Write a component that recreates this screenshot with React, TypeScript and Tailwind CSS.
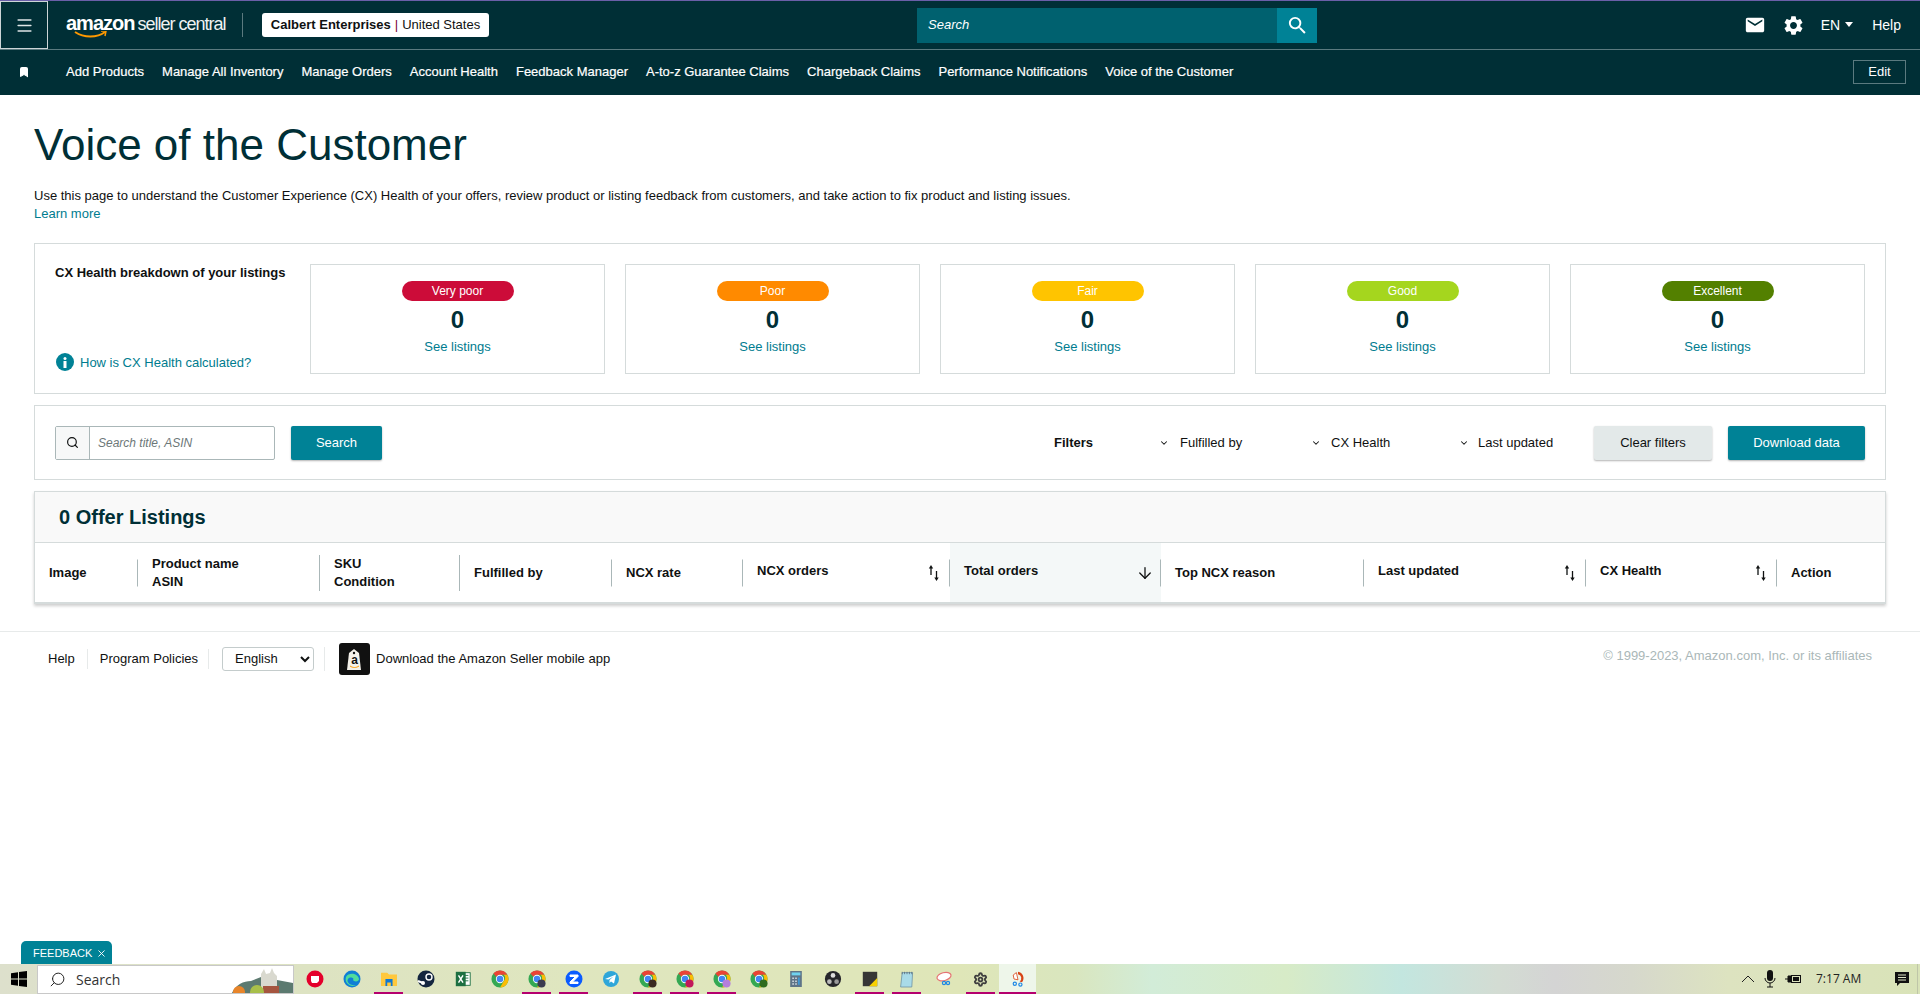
import React from "react";
import { Menu, Bookmark, Search, Settings, ChevronDown, ArrowDown, X } from "lucide-react";
import { MdEmail, MdSettings, MdSearch } from "react-icons/md";

const nav = ["Add Products","Manage All Inventory","Manage Orders","Account Health","Feedback Manager","A-to-z Guarantee Claims","Chargeback Claims","Performance Notifications","Voice of the Customer"];
const cards = [
  ["Very poor","bg-[#cc0c39]"],["Poor","bg-[#ff8a00]"],["Fair","bg-[#ffc400]"],["Good","bg-[#a5d61e]"],["Excellent","bg-[#538000]"],
];

function SortIcon() {
  return (
    <svg width="12" height="18" viewBox="0 0 12 18" className="text-[#0f1111] mr-[3px]">
      <path d="M3 11V3" stroke="currentColor" strokeWidth="1.3" fill="none" />
      <path d="M0.800 4.500L3 1l2.200 3.500z" fill="currentColor" />
      <path d="M8.500 7v8" stroke="currentColor" strokeWidth="1.3" fill="none" />
      <path d="M6.300 13.500L8.500 17l2.200-3.500z" fill="currentColor" />
    </svg>
  );
}

function Chrome({ badge }: { badge?: string }) {
  return (
    <svg width="18" height="18" viewBox="0 0 20 20">
      <circle cx="10" cy="10" r="9.500" fill="#34a853" />
      <path d="M10 .5a9.500 9.500 0 0 1 8.200 4.750H10A4.750 4.750 0 0 0 5.900 7.600L2.700 4A9.500 9.500 0 0 1 10 .5z" fill="#ea4335" />
      <path d="M18.200 5.250A9.500 9.500 0 0 1 10 19.500l4.100-7.100a4.750 4.750 0 0 0 0-7.150z" fill="#fbbc05" />
      <circle cx="10" cy="10" r="4.600" fill="#fff" />
      <circle cx="10" cy="10" r="3.600" fill="#4285f4" />
      {badge && <circle cx="15" cy="15" r="4.500" fill={badge} />}
    </svg>
  );
}

type Item = { el: React.ReactNode; open?: boolean; active?: boolean };
const items: Item[] = [
  { el: <svg width="20" height="20" viewBox="0 0 20 20"><circle cx="10" cy="10" r="8.500" fill="#e4002b"/><path d="M6 7h8v5l-2 2H7l-1-2z" fill="#fff"/></svg> },
  { el: <svg width="20" height="20" viewBox="0 0 20 20"><circle cx="10" cy="10" r="8.500" fill="#0f7fd6"/><path d="M4 8c2-4 11-5 13 2 0 3-5 3-6 1 2-2-3-4-5-1-2 3 2 7 8 6-5 3-12-2-10-8z" fill="#4fdc9c"/></svg> },
  { open: true, el: <svg width="18" height="16" viewBox="0 0 20 18"><path d="M1 2h7l2 2h9v13H1z" fill="#ffc83d"/><path d="M6 9h8v8h-2v-4H8v4H6z" fill="#0f78d4"/></svg> },
  { el: <svg width="20" height="20" viewBox="0 0 20 20"><circle cx="10" cy="10" r="8.500" fill="#14263f"/><circle cx="13" cy="8" r="3" fill="none" stroke="#fff" strokeWidth="1.400"/><path d="M2 12l5 2" stroke="#fff" strokeWidth="2"/><circle cx="7" cy="14" r="2" fill="#fff"/></svg> },
  { el: <svg width="18" height="18" viewBox="0 0 20 20"><rect x="8" y="3" width="10" height="14" fill="#fff" stroke="#1d6f42"/><path d="M10 6h6M10 9h6M10 12h6" stroke="#1d6f42"/><rect x="2" y="2" width="11" height="16" fill="#1d6f42"/><path d="M5 6l5 8M10 6l-5 8" stroke="#fff" strokeWidth="1.600"/></svg> },
  { el: <Chrome /> },
  { open: true, el: <Chrome badge="#3b3b4f" /> },
  { open: true, el: <svg width="20" height="20" viewBox="0 0 20 20"><circle cx="10" cy="10" r="8.500" fill="#0b5cff"/><path d="M6 6h8v1.500L8.500 13H14v1.500H6V13l5.500-5.500H6z" fill="#fff" stroke="#fff"/></svg> },
  { el: <svg width="20" height="20" viewBox="0 0 20 20"><circle cx="10" cy="10" r="8" fill="#2ea6d9"/><path d="M4 10l11-4.500-2 9-3-2-1.500 1.500V11l4-3.500-5 3z" fill="#fff"/></svg> },
  { open: true, el: <Chrome badge="#3a2a22" /> },
  { open: true, el: <Chrome badge="#c2185b" /> },
  { open: true, el: <Chrome badge="#b57edc" /> },
  { el: <Chrome badge="#2e6b1f" /> },
  { el: <svg width="12" height="16" viewBox="0 0 16 22"><rect width="16" height="22" fill="#5f7488"/><rect x="2" y="2" width="12" height="4" fill="#6fd3f0"/><path d="M3 9h2v2H3zM7 9h2v2H7zM3 13h2v2H3zM7 13h2v2H7zM3 17h2v2H3zM7 17h2v2H7z" fill="#dfe6ec"/><rect x="11" y="9" width="2" height="10" fill="#3aa0e6"/></svg> },
  { el: <svg width="18" height="18" viewBox="0 0 20 20"><circle cx="10" cy="10" r="9" fill="#26262b"/><circle cx="10" cy="6" r="2.600" fill="#ddd"/><circle cx="6" cy="13" r="2.600" fill="#bbb"/><circle cx="14" cy="13" r="2.600" fill="#999"/></svg> },
  { open: true, el: <svg width="18" height="18" viewBox="0 0 20 20"><rect x="2" y="2" width="16" height="16" fill="#363636"/><path d="M18 9v9h-9z" fill="#f7d000"/></svg> },
  { open: true, el: <svg width="16" height="18" viewBox="0 0 20 22"><path d="M4 3h13l-1 18H2z" fill="#a9dbe8" stroke="#6f93a3"/><path d="M4 2v3M7 2v3M10 2v3M13 2v3M16 2v3" stroke="#567"/></svg> },
  { el: <svg width="18" height="16" viewBox="0 0 22 20"><ellipse cx="11" cy="7" rx="9" ry="5" fill="#fff" stroke="#e57373" strokeWidth="1.500" transform="rotate(-15 11 7)"/><circle cx="11" cy="15" r="2" fill="none" stroke="#1e88e5" strokeWidth="1.500"/><circle cx="16" cy="15" r="2" fill="none" stroke="#1e88e5" strokeWidth="1.500"/></svg> },
  { open: true, el: <Settings size={15} strokeWidth={3} className="text-[#3f3f3f]" /> },
  { open: true, active: true, el: <svg width="16" height="18" viewBox="0 0 20 22"><path d="M10 2a8 8 0 0 1 5 13l-3-1a5 5 0 0 0-2-9z" fill="#d84315"/><path d="M8 3L4 6l1 5 5 1z" fill="#fff" stroke="#d84315"/><circle cx="6" cy="17" r="2" fill="none" stroke="#1e88e5" strokeWidth="1.500"/><circle cx="13" cy="18" r="2" fill="none" stroke="#1e88e5" strokeWidth="1.500"/></svg> },
];

function Th({ w, label, sub, sort, raised, div = "h-[27px]", bg, icon }: { w: string; label: string; sub?: string; sort?: boolean; raised?: boolean; div?: string; bg?: string; icon?: React.ReactNode }) {
  return (
    <div className={`${w} ${bg ?? ""} relative flex items-center pl-[14px] pr-[7px] h-full shrink-0`}>
      <div className={`flex-1 text-[13px] font-bold leading-[18px] text-[#0f1111] ${raised ? "-mt-[3px]" : ""}`}>
        <div>{label}</div>
        {sub && <div>{sub}</div>}
      </div>
      {sort && <SortIcon />}
      {icon}
      {div !== "none" && <div className={`absolute right-0 top-1/2 -translate-y-1/2 w-px ${div} bg-[#aab7b8]`} />}
    </div>
  );
}

export default function App() {
  return (
    <div className="relative h-[994px] overflow-hidden flex flex-col bg-white font-['Liberation_Sans',Arial,sans-serif] text-[13px] text-[#0f1111]">
      <header className="bg-[#002f36] text-white border-t border-[#6a5fa8] shrink-0">
        <div className="h-[48px] flex items-center border-b border-[#5b7a7f] box-content">
          <div className="w-[48px] h-[48px] border border-white/80 flex items-center justify-center shrink-0">
            <Menu size={19} strokeWidth={2} className="text-[#dfe6e7]" />
          </div>
          <div className="relative ml-[18px] w-[158px] flex items-baseline leading-none -mt-[5px] whitespace-nowrap shrink-0">
            <span className="text-[20px] font-bold tracking-[-1px]">amazon</span>
            <span className="text-[18px] ml-[3px] tracking-[-1px] text-[#eef2f2]">seller central</span>
            <svg width="34" height="9" viewBox="0 0 34 9" className="absolute left-[8px] top-[18px]">
              <path d="M1 1c9 6 22 6 30 0" stroke="#ff9900" strokeWidth="2" fill="none" />
              <path d="M27 0l5 0-1 5" stroke="#ff9900" strokeWidth="1.500" fill="none" />
            </svg>
          </div>
          <div className="ml-[18px] w-px h-[24px] bg-[#5b7a7f]" />
          <div className="ml-[19px] h-[24px] w-[227px] bg-white rounded-[3px] flex items-center justify-center text-[13px] text-[#0f1111] whitespace-nowrap">
            <span className="font-bold">Calbert Enterprises</span>
            <span className="text-[#7a0030] mx-[4px]">|</span>
            <span>United States</span>
          </div>
          <div className="ml-[428px] w-[360px] h-[35px] bg-[#00616f] flex items-center pl-[11px] italic text-[13px] text-white">Search</div>
          <div className="w-[40px] h-[35px] bg-[#008296] flex items-center justify-center">
            <MdSearch size={23} />
          </div>
          <div className="flex-1" />
          <MdEmail size={22} />
          <MdSettings size={23} className="ml-[16px]" />
          <span className="ml-[16px] text-[14px]">EN</span>
          <svg width="10" height="6" viewBox="0 0 10 6" className="ml-[4px]"><path d="M1 0h8L5 5z" fill="#fff" /></svg>
          <span className="ml-[18px] mr-[19px] text-[14px]">Help</span>
        </div>
        <nav className="h-[45px] flex items-center pb-[2px]">
          <div className="w-[48px] flex justify-center shrink-0">
            <Bookmark size={12} fill="#fff" stroke="#fff" />
          </div>
          <div className="ml-[18px] flex gap-[18px] text-[13px] font-medium whitespace-nowrap [-webkit-text-stroke:0.2px_white]">
            {nav.map((n) => <span key={n}>{n}</span>)}
          </div>
          <div className="flex-1" />
          <div className="mr-[14px] w-[53px] h-[24px] border border-[#5b7a7f] flex items-center justify-center text-[13px]">Edit</div>
        </nav>
      </header>

      <main className="px-[34px] shrink-0">
        <h1 className="mt-[24px] text-[44px] leading-[52px] font-normal text-[#002f36]">Voice of the Customer</h1>
        <p className="mt-[16px] text-[13px] leading-[18px] text-[#0f1111]">Use this page to understand the Customer Experience (CX) Health of your offers, review product or listing feedback from customers, and take action to fix product and listing issues.</p>
        <a className="block text-[13px] leading-[18px] text-[#007c8f]">Learn more</a>

        <section className="mt-[20px] h-[151px] border border-[#d5dbdb] px-[20px] pt-[20px] flex">
          <div className="w-[255px] h-[110px] flex flex-col justify-between shrink-0">
            <div className="text-[13px] font-bold leading-[18px] text-[#0f1111]">CX Health breakdown of your listings</div>
            <div className="flex items-center gap-[6px] text-[#007c8f] pb-[2px] pl-[1px]">
              <span className="w-[18px] h-[18px] rounded-full bg-[#008296] flex items-center justify-center">
                <svg width="4" height="11" viewBox="0 0 4 11"><circle cx="2" cy="1.500" r="1.500" fill="#fff" /><rect x="0.500" y="4" width="3" height="7" fill="#fff" /></svg>
              </span>
              <span>How is CX Health calculated?</span>
            </div>
          </div>
          <div className="flex gap-[20px]">
            {cards.map(([l, c]) => (
              <div key={l} className="w-[295px] h-[110px] border border-[#d5dbdb] flex flex-col items-center pt-[16px]">
                <div className={`w-[112px] h-[20px] rounded-[10px] ${c} text-white text-[12px] flex items-center justify-center`}>{l}</div>
                <div className="mt-[4px] text-[24px] font-bold leading-[30px] text-[#002f36]">0</div>
                <div className="mt-[2px] text-[13px] leading-[20px] text-[#007c8f]">See listings</div>
              </div>
            ))}
          </div>
        </section>

        <section className="mt-[11px] h-[75px] border border-[#d5dbdb] px-[20px] flex items-center">
          <div className="w-[220px] h-[34px] border border-[#aab7b8] rounded-[2px] flex items-center shrink-0">
            <div className="w-[34px] h-full bg-[#f7f8f8] border-r border-[#aab7b8] flex items-center justify-center">
              <Search size={13} strokeWidth={2.200} className="text-[#0f1111]" />
            </div>
            <span className="pl-[8px] italic text-[12px] text-[#6c7778]">Search title, ASIN</span>
          </div>
          <div className="ml-[16px] w-[91px] h-[34px] bg-[#008296] text-white rounded-[2px] flex items-center justify-center shadow-[0_1px_2px_rgba(0,0,0,0.3)]">Search</div>
          <div className="flex-1" />
          <span className="w-[105px] font-bold">Filters</span>
          <ChevronDown size={10} strokeWidth={2.500} />
          <span className="ml-[11px] w-[131px]">Fulfilled by</span>
          <ChevronDown size={10} strokeWidth={2.500} />
          <span className="ml-[10px] w-[128px]">CX Health</span>
          <ChevronDown size={10} strokeWidth={2.500} />
          <span className="ml-[9px] w-[116px]">Last updated</span>
          <div className="w-[118px] h-[34px] bg-[#e3e9e9] rounded-[2px] flex items-center justify-center shadow-[0_1px_2px_rgba(0,0,0,0.3)]">Clear filters</div>
          <div className="ml-[16px] w-[137px] h-[34px] bg-[#008296] text-white rounded-[2px] flex items-center justify-center shadow-[0_1px_2px_rgba(0,0,0,0.3)]">Download data</div>
        </section>

        <section className="mt-[11px] h-[113px] border border-[#d5dbdb] border-b-2 shadow-[0_2px_3px_rgba(0,0,0,0.2)]">
          <div className="h-[51px] bg-[#f9f9f9] border-b border-[#d5dbdb] flex items-center pl-[24px] text-[20px] font-bold text-[#002f36]">0 Offer Listings</div>
          <div className="h-[59px] flex">
            <Th w="w-[103px]" label="Image" />
            <Th w="w-[182px]" label="Product name" sub="ASIN" div="h-[36px]" />
            <Th w="w-[140px]" label="SKU" sub="Condition" div="h-[36px]" />
            <Th w="w-[152px]" label="Fulfilled by" />
            <Th w="w-[131px]" label="NCX rate" />
            <Th w="w-[207px]" label="NCX orders" sort raised />
            <Th w="w-[211px]" label="Total orders" raised bg="bg-[#f4f8f8]" icon={<ArrowDown size={18} strokeWidth={1.700} />} />
            <Th w="w-[203px]" label="Top NCX reason" />
            <Th w="w-[222px]" label="Last updated" sort raised />
            <Th w="w-[191px]" label="CX Health" sort raised />
            <Th w="w-[108px]" label="Action" div="none" />
          </div>
        </section>
      </main>

      <footer className="mt-[27px] border-t border-[#e7eaea] h-[54px] pl-[48px] pr-[48px] flex items-center text-[13px] text-[#0f1111] shrink-0">
        <span>Help</span>
        <div className="ml-[12px] w-px h-[20px] bg-[#e7eaea]" />
        <span className="ml-[12px]">Program Policies</span>
        <div className="ml-[10px] w-px h-[20px] bg-[#e7eaea]" />
        <select defaultValue="English" className="ml-[13px] w-[92px] h-[24px] border border-[#c4cccc] rounded-[3px] pl-[8px] text-[13px] bg-white">
          <option>English</option>
        </select>
        <div className="ml-[10px] w-px h-[24px] bg-[#e7eaea]" />
        <div className="ml-[14px] w-[31px] h-[32px] bg-[#111] rounded-[3px] flex items-center justify-center">
          <svg width="17" height="24" viewBox="0 0 17 24">
            <path d="M3 6l5-4 5 4 2 17H1z" fill="#f4f1ea" />
            <circle cx="8" cy="6" r="1.200" fill="#111" />
            <text x="8.500" y="17" fontSize="12" fontWeight="700" textAnchor="middle" fill="#111" fontFamily="Liberation Sans">a</text>
            <path d="M4 19c3 2 6 2 9 0" stroke="#ff9900" fill="none" />
          </svg>
        </div>
        <span className="ml-[6px]">Download the Amazon Seller mobile app</span>
        <div className="flex-1" />
        <span className="text-[#aab7b8] text-[13px] -mt-[6px]">© 1999-2023, Amazon.com, Inc. or its affiliates</span>
      </footer>

      <div className="flex-1" />

      <div className="absolute left-[21px] top-[941px] w-[91px] h-[23px] bg-[#008296] rounded-t-[5px] flex items-center pl-[12px] pt-[2px] text-white text-[11px] font-medium gap-[4px]">
        FEEDBACK <X size={11} strokeWidth={2} />
      </div>

      <div className="h-[30px] shrink-0 flex items-center bg-[linear-gradient(90deg,#dde0cc_0%,#dde3c2_16%,#dfe6bf_30%,#dfe6b8_50%,#d9e6bf_56%,#d2ecd8_60%,#d7ebc7_67%,#c3e6df_73%,#d3dcd3_78%,#d4d4d4_81%,#d6d8cc_85%,#dde3c0_90%,#d9e3b8_100%)] relative">
        <div className="w-[37px] flex justify-center shrink-0">
          <svg width="16" height="16" viewBox="0 0 16 16"><path d="M0 2.200l7-1v6.300H0zM8 1l8-1v7.500H8zM0 8.500h7v6.300l-7-1zM8 8.500h8V16l-8-1z" fill="#000" /></svg>
        </div>
        <div className="relative w-[257px] h-[29px] bg-white border border-[#c8c8c8] flex items-center pl-[11px] gap-[10px] overflow-hidden shrink-0 text-[14px] text-[#333] font-['Open_Sans',sans-serif]">
          <Search size={17} strokeWidth={1.400} className="scale-x-[-1] text-[#222]" />
          <span>Search</span>
          <svg width="62" height="29" viewBox="0 0 62 29" className="absolute right-0 top-0">
            <path d="M0 29c4-10 12-14 20-14l10-4 32 6v12z" fill="#5c7a70" />
            <path d="M30 29V8l3-5 2 5 4-1 2-5 2 5 3 3v19z" fill="#d9d9cf" />
            <path d="M32 20h16v9H32z" fill="#a5553f" />
            <circle cx="8" cy="26" r="6" fill="#e8852a" />
            <circle cx="26" cy="26" r="7" fill="#a8bf4a" />
          </svg>
        </div>
        <div className="ml-[2px] flex h-full">
          {items.map((it, i) => (
            <div key={i} className={`relative w-[37px] h-[30px] flex items-center justify-center ${it.active ? "bg-[#eef6ea]" : ""}`}>
              {it.el}
              {it.open && <div className={`absolute bottom-0 h-[2px] bg-[#b5006e] ${it.active ? "left-0 right-0" : "left-[4px] right-[4px]"}`} />}
            </div>
          ))}
        </div>
        <div className="flex-1" />
        <div className="flex items-center text-[#222]">
          <svg width="14" height="8" viewBox="0 0 14 8" className="mr-[9px]"><path d="M1 7l6-6 6 6" stroke="#222" strokeWidth="1" fill="none" /></svg>
          <svg width="12" height="18" viewBox="0 0 12 18" className="mr-[9px]"><rect x="3" y="0" width="6" height="11" rx="3" fill="#111" /><path d="M1 8a5 5 0 0 0 10 0M6 13v4M3 17h6" stroke="#111" fill="none" /></svg>
          <svg width="16" height="10" viewBox="0 0 16 10" className="mr-[15px]"><path d="M0 5h3M3 2h3v6H3z" fill="#111" stroke="#111" /><rect x="6.500" y="1.500" width="9" height="7" fill="none" stroke="#111" /><rect x="8" y="3" width="6" height="4" fill="#111" /></svg>
          <span className="text-[12px] w-[71px] font-['Open_Sans',sans-serif]">7:17 AM</span>
          <svg width="16" height="16" viewBox="0 0 16 16" className="mx-[7px]"><path d="M1 1h14v11H6l-3 3v-3H1z" fill="#111" /><path d="M4 4h8M4 6.500h8M4 9h8" stroke="#dde4c5" strokeWidth="1" /></svg>
          <div className="w-px h-[30px] bg-[#bfc6a8] mr-[2px]" />
        </div>
      </div>
    </div>
  );
}
